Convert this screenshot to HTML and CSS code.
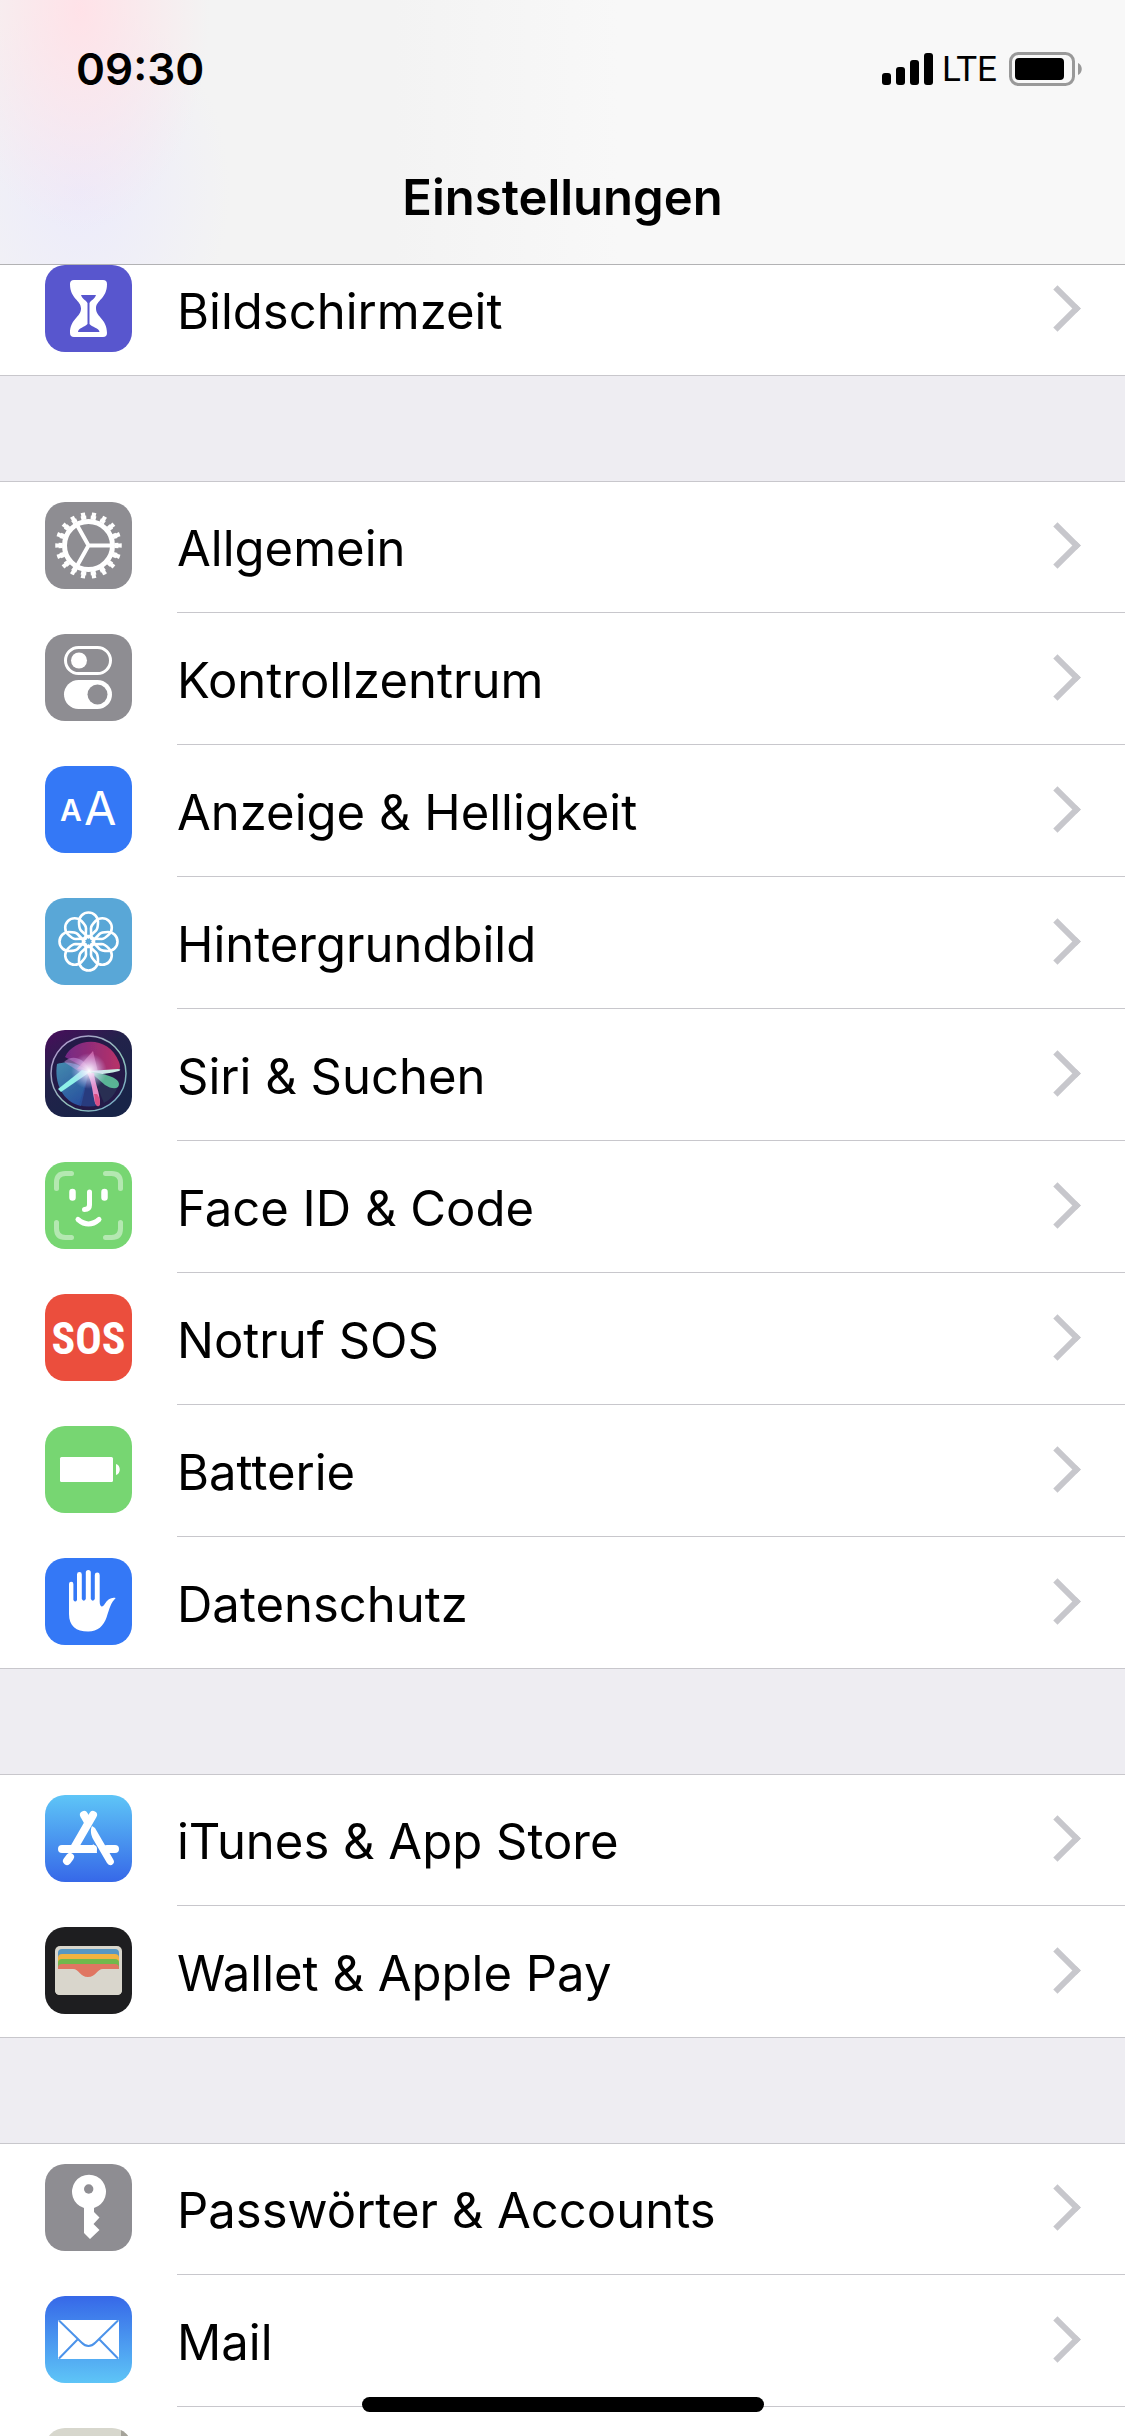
FILE: index.html
```
<!DOCTYPE html>
<html lang="de">
<head>
    <meta charset="UTF-8">
    <meta name="viewport" content="width=device-width, initial-scale=1.0">
    <title>Einstellungen</title>
    <link rel="stylesheet" href="styles.css">
</head>
<body>

<header class="header">
    <div class="status">
        <span class="time">09:30</span>
        <div class="statusRight">
            <svg class="signal" viewBox="0 0 52 33" aria-hidden="true">
                <rect x="0" y="20" width="9" height="12" rx="3"/>
                <rect x="14" y="14" width="9" height="18" rx="3"/>
                <rect x="28" y="7" width="9" height="25" rx="3"/>
                <rect x="42" y="0" width="9" height="32" rx="3"/>
            </svg>
            <span class="network">LTE</span>
            <svg class="batteryStatus" viewBox="0 0 74 34" aria-hidden="true">
                <rect x="1.5" y="1.5" width="63" height="31" rx="8" fill="none" stroke="#999" stroke-width="3"/>
                <rect x="6" y="6" width="49" height="22" rx="4"/>
                <path d="M69 11c5 2 5 10 0 12z" fill="#999"/>
            </svg>
        </div>
    </div>
    <h1>Einstellungen</h1>
</header>

<main class="list">
    <ul class="group">
        <li><a class="row" href="#">
            <svg class="icon purple" viewBox="0 0 87 87" aria-hidden="true">
                <path d="M29 15h29q4 0 4 4C62 34 51 35 51 43.500S62 54 62 68q0 4-4 4H29q-4 0-4-4C25 54 36 52 36 43.500S25 34 25 19q0-4 4-4z" fill="#fff"/>
                <path d="M36 30h15c-1 4-5 5-6.500 8v21c2 3 10 4 10 8H33c0-4 7-5 9.500-8V38c-1.500-3-5.500-4-6.500-8z" fill="#5856ce"/>
            </svg>
            <span class="label">Bildschirmzeit</span>
        </a></li>
    </ul>

    <ul class="group">
        <li><a class="row" href="#">
            <svg class="icon gray" viewBox="0 0 87 87" aria-hidden="true">
                <g fill="none" stroke="#fff">
                    <circle cx="43.5" cy="43.5" r="24" stroke-width="5"/>
                    <circle cx="43.5" cy="43.5" r="28" stroke-width="4" pathLength="180" stroke-dasharray="5.4 4.600" stroke-dashoffset="2.7"/>
                    <circle cx="43.5" cy="43.5" r="31" stroke-width="4.500" pathLength="180" stroke-dasharray="3.8 6.2" stroke-dashoffset="1.9"/>
                    <path d="M43.500 43.500H66M43.500 43.500L32 23M43.500 43.500L32 64" stroke-width="4"/>
                </g>
            </svg>
            <span class="label">Allgemein</span>
        </a></li>
        <li><a class="row" href="#">
            <svg class="icon gray" viewBox="0 0 87 87" aria-hidden="true">
                <rect x="20.5" y="13.5" width="45" height="26" rx="13" fill="none" stroke="#fff" stroke-width="3"/>
                <circle cx="34" cy="26.5" r="8" fill="#fff"/>
                <rect x="19" y="46" width="48" height="29" rx="14.5" fill="#fff"/>
                <circle cx="52.5" cy="60.5" r="10" fill="#8e8d92"/>
            </svg>
            <span class="label">Kontrollzentrum</span>
        </a></li>
        <li><a class="row" href="#">
            <svg class="icon blue" viewBox="0 0 87 87" aria-hidden="true">
                <text class="smallA" x="15" y="55">A</text>
                <text class="bigA" x="39" y="59">A</text>
            </svg>
            <span class="label">Anzeige &amp; Helligkeit</span>
        </a></li>
        <li><a class="row" href="#">
            <svg class="icon lightBlue" viewBox="0 0 87 87" aria-hidden="true">
                <g fill="none" stroke="#fff" stroke-width="2.6" stroke-linejoin="round">
                    <circle cx="43.5" cy="43.5" r="5.500"/>
                    <g id="flower">
                        <path id="petal" d="M43.500 39.500L36 32.500Q34 30.500 34 24a9.500 9.500 0 0 1 19 0Q53 30.500 51 32.500z"/>
                        <use href="#petal" transform="rotate(45 43.5 43.5)"/>
                        <use href="#petal" transform="rotate(90 43.5 43.5)"/>
                        <use href="#petal" transform="rotate(135 43.5 43.5)"/>
                    </g>
                    <use href="#flower" transform="rotate(180 43.5 43.5)"/>
                </g>
            </svg>
            <span class="label">Hintergrundbild</span>
        </a></li>
        <li><a class="row" href="#">
            <svg class="icon" viewBox="0 0 87 87" aria-hidden="true">
                <defs>
                    <linearGradient id="siriBg" x1="0" y1="0" x2="0.6" y2="1">
                        <stop offset="0" stop-color="#4a0d5c"/>
                        <stop offset="0.45" stop-color="#22224a"/>
                        <stop offset="1" stop-color="#182448"/>
                    </linearGradient>
                    <linearGradient id="siriRing" x1="0" y1="0" x2="1" y2="1">
                        <stop offset="0" stop-color="#b48fd0"/>
                        <stop offset="0.6" stop-color="#8fc4b8"/>
                        <stop offset="1" stop-color="#6f9fc8"/>
                    </linearGradient>
                    <linearGradient id="siriPink" x1="0" y1="0" x2="1" y2="0">
                        <stop offset="0" stop-color="#7c2a8c"/>
                        <stop offset="1" stop-color="#c8346c"/>
                    </linearGradient>
                    <linearGradient id="siriBlue" x1="0" y1="0" x2="0.5" y2="1">
                        <stop offset="0" stop-color="#4a9fc0"/>
                        <stop offset="1" stop-color="#2a5fae"/>
                    </linearGradient>
                    <radialGradient id="siriGlow">
                        <stop offset="0" stop-color="#fff"/>
                        <stop offset="0.35" stop-color="#f0e8ff" stop-opacity="0.7"/>
                        <stop offset="1" stop-color="#d0c0ff" stop-opacity="0"/>
                    </radialGradient>
                    <filter id="soft"><feGaussianBlur stdDeviation="0.7"/></filter>
                </defs>
                <rect width="87" height="87" fill="url(#siriBg)"/>
                <circle cx="43.5" cy="43.5" r="37.5" fill="#241a48" stroke="url(#siriRing)" stroke-width="1.5"/>
                <g filter="url(#soft)">
                    <path d="M20 27C29 8 63 4 74 32q2 5 0 8L46 41z" fill="url(#siriPink)" opacity="0.9"/>
                    <path d="M12 34C24 30 34 34 44 42L36 76C17 72 9 52 12 34z" fill="url(#siriBlue)" opacity="0.85"/>
                    <path d="M44 42L34 75q10 3 19 0z" fill="#2b4a96" opacity="0.7"/>
                    <path d="M46 42l27 14q-4 12-14 17z" fill="#2c3c5c" opacity="0.6"/>
                    <path d="M19 32c8-8 20-5 27 10l-8 2z" fill="#c79ae0" opacity="0.5"/>
                    <path d="M32 39L48 21l5 21z" fill="#e889c8" opacity="0.6"/>
                    <path d="M44 41l29-2q4 0 1 2-12 3-28 4z" fill="#c8ece4"/>
                    <path d="M44 41c14 3 30 6 30 13 0 6-8 5-14 1z" fill="#5fc49c" opacity="0.9"/>
                    <path d="M45 42L16 62l-3-3 24-19z" fill="#8ef0e8"/>
                    <path d="M42 43c5 8 5 18 8 30q3 6 5 1c0-12-5-20-6-31z" fill="#e58cc6"/>
                    <path d="M49 64c1 3 0 7 2 11q3 3 4-1c0-5-1-7-3-10z" fill="#d84f86"/>
                </g>
                <circle cx="44" cy="41" r="18" fill="url(#siriGlow)"/>
            </svg>
            <span class="label">Siri &amp; Suchen</span>
        </a></li>
        <li><a class="row" href="#">
            <svg class="icon green" viewBox="0 0 87 87" aria-hidden="true">
                <g fill="none" stroke="#fff" stroke-width="5" stroke-linecap="round">
                    <path d="M11.500 26.500v-6q0-9 9-9h6M60.500 11.500h6q9 0 9 9v6M75.500 60.500v6q0 9-9 9h-6M26.500 75.500h-6q-9 0-9-9v-6" opacity="0.45"/>
                    <path d="M27.500 30v5.500M59.500 30v5.500" stroke-width="6.5"/>
                    <path d="M44.500 30v13q0 4.500-5 4.500"/>
                    <path d="M33 57.500q10.500 9 21 0"/>
                </g>
            </svg>
            <span class="label">Face ID &amp; Code</span>
        </a></li>
        <li><a class="row" href="#">
            <svg class="icon red" viewBox="0 0 87 87" aria-hidden="true">
                <text class="sos" x="43.5" y="60">SOS</text>
            </svg>
            <span class="label">Notruf SOS</span>
        </a></li>
        <li><a class="row" href="#">
            <svg class="icon green" viewBox="0 0 87 87" aria-hidden="true">
                <rect x="15" y="31" width="53" height="25" rx="1.5" fill="#fff"/>
                <path d="M71 38c5 1 5 10 0 11z" fill="#fff"/>
            </svg>
            <span class="label">Batterie</span>
        </a></li>
        <li><a class="row" href="#">
            <svg class="icon blue" viewBox="0 0 87 87" aria-hidden="true">
                <path d="M24 26a2.200 2.200 0 0 1 4.400 0V42q2 3 3.600 0V16.500a2.400 2.400 0 0 1 4.800 0V41q2 3.500 4 0V14.500a2.500 2.500 0 0 1 5 0V41q2 3.500 4 0V17a2.400 2.400 0 0 1 4.900 0V44c0 5 3 6 5 2 3-5 7-7 11-6-5 5-6 10-9 19-3 9-9 14.500-18.500 14.500C31 73.500 24 68 24 56z" fill="#fff"/>
            </svg>
            <span class="label">Datenschutz</span>
        </a></li>
    </ul>

    <ul class="group">
        <li><a class="row" href="#">
            <svg class="icon appStore" viewBox="0 0 87 87" aria-hidden="true">
                <g fill="none" stroke="#fff" stroke-width="8" stroke-linecap="round">
                    <path d="M48 20L29 53"/>
                    <path d="M39 20l4 7"/>
                    <path d="M17 54h31"/>
                    <path d="M62 54h8"/>
                    <path d="M25 62l-3 4"/>
                </g>
                <path d="M47 31c-2 4-1 9 1 13l14 24q3 4 6 1 2-2 0-5L50 33z" fill="#fff"/>
                <path d="M48 49q4 3 4 9h-6z" fill="#fff"/>
            </svg>
            <span class="label">iTunes &amp; App Store</span>
        </a></li>
        <li><a class="row" href="#">
            <svg class="icon dark" viewBox="0 0 87 87" aria-hidden="true">
                <rect x="10" y="19" width="67" height="49" rx="5" fill="#d9d6cc"/>
                <path d="M13 42V26q0-4 4-4h53q4 0 4 4v16z" fill="#5797c2"/>
                <path d="M13 42V31q0-4 4-4h53q4 0 4 4v11z" fill="#f1b340"/>
                <path d="M13 42V36q0-4 4-4h53q4 0 4 4v6z" fill="#71b84c"/>
                <path d="M13 42V41q0-4 4-4h53q4 0 4 4v1L60 52H28z" fill="#e07662"/>
                <path d="M10 42h18c6 0 7 8 15 8s9-8 15-8h19v21q0 5-5 5H15q-5 0-5-5z" fill="#d9d6cc"/>
            </svg>
            <span class="label">Wallet &amp; Apple Pay</span>
        </a></li>
    </ul>

    <ul class="group">
        <li><a class="row" href="#">
            <svg class="icon gray" viewBox="0 0 87 87" aria-hidden="true">
                <path d="M39 44a17 17 0 1 1 10 0v4l5.500 5.500L48.500 60l6 6L45 75l-6-6z" fill="#fff"/>
                <circle cx="43.7" cy="25" r="4.7" fill="#8e8d92"/>
            </svg>
            <span class="label">Passwörter &amp; Accounts</span>
        </a></li>
        <li><a class="row" href="#">
            <svg class="icon mail" viewBox="0 0 87 87" aria-hidden="true">
                <rect x="13" y="24" width="61" height="39" rx="1.5" fill="#fff"/>
                <path d="M14 24.500L36.500 46.500q7 7 14 0L73 24.500M14 62.500L32.500 43.500M73 62.500L54.500 43.500" fill="none" stroke="#4c93ea" stroke-width="2"/>
            </svg>
            <span class="label">Mail</span>
        </a></li>
        <li><a class="row" href="#" aria-label="Kontakte">
            <svg class="icon contacts" viewBox="0 0 87 87" aria-hidden="true">
                <path d="M76 0h11v87H76z" fill="#a5a39a"/>
            </svg>
            <span class="label"></span>
        </a></li>
    </ul>
</main>

<div class="homeBar"></div>

</body>
</html>
```
FILE: styles.css
```
* {
    box-sizing: border-box;
}
body {
    margin: 0;
    height: 100vh;
    display: flex;
    flex-direction: column;
    overflow: hidden;
    background-color: #eeedf2;
    color: #000;
    font-family: Inter, "Liberation Sans", sans-serif;
}
.header {
    position: relative; /* keeps the bar above the scrolled list */
    z-index: 1;
    flex: none;
    border-bottom: 1px solid #b2b2b4;
    background:
        radial-gradient(130px 220px at 80px 10px, #ffe2e8, transparent),
        radial-gradient(150px 190px at 80px 190px, #ecebfb, transparent),
        linear-gradient(90deg, #f3f3f3 0%, #f3f3f3 35%, #f8f8f8 55%, #f8f8f8 100%);
}
.status {
    display: flex;
    justify-content: space-between;
    align-items: center;
    height: 138px;
    padding: 0 42px 0 76px;
}
.time {
    font-size: 44px;
    font-weight: 600;
}
.statusRight {
    display: flex;
    align-items: center;
}
.signal {
    width: 52px;
    height: 33px;
}
.network {
    margin: 0 12px 0 8px;
    font-family: Roboto, "Liberation Sans", sans-serif;
    font-size: 35px;
}
.batteryStatus {
    width: 74px;
    height: 34px;
}
h1 {
    margin: 0;
    height: 126px;
    font-size: 49px;
    font-weight: 600;
    line-height: 120px;
    text-align: center;
}
.list {
    flex: 1;
    margin-top: -21px; /* list is scrolled a bit under the header */
    overflow: hidden;
}
.group {
    margin: 0 0 105px;
    padding: 0;
    list-style: none;
    background-color: #fff;
    border-bottom: 1px solid #c8c7cc;
    box-shadow: inset 0 1px #c8c7cc;
}
.row {
    display: flex;
    align-items: center;
    height: 132px;
    padding-left: 45px;
    color: inherit;
    text-decoration: none;
}
.group li:last-child .row {
    height: 131px;
}
.icon {
    flex: none;
    width: 87px;
    height: 87px;
    margin-bottom: 3px;
    border-radius: 20px;
}
.label {
    flex: 1;
    display: flex;
    align-items: center;
    justify-content: space-between;
    height: 100%;
    margin-left: 45px;
    padding: 3px 51px 0 0;
    border-bottom: 1px solid #c8c7cc;
    font-size: 49px;
}
.group li:last-child .label {
    border-bottom: 0;
}
.label::after {
    content: "";
    width: 27px;
    height: 27px;
    margin-bottom: 5px;
    border: solid #c7c7cc;
    border-width: 6px 6px 0 0;
    transform: rotate(45deg);
}
.purple {
    background-color: #5856ce;
}
.gray {
    background-color: #8e8d92;
}
.blue {
    background-color: #3478f6;
}
.lightBlue {
    background-color: #59a7d7;
}
.green {
    background-color: #77d672;
}
.red {
    background-color: #eb4e3d;
}
.dark {
    background-color: #1e1e20;
}
.appStore {
    background-image: linear-gradient(#5ec5f7, #3668e8);
}
.mail {
    background-image: linear-gradient(#3668e8, #5ec5f7);
}
.contacts {
    background-color: #d7d7cd;
}
.smallA, .bigA, .sos {
    fill: #fff;
}
.smallA {
    font-size: 30px;
    font-weight: 600;
}
.bigA {
    font-size: 47px;
}
.sos {
    font-family: "Liberation Sans Narrow", "Roboto Condensed", "Liberation Sans", sans-serif;
    font-size: 44px;
    font-weight: 700;
    text-anchor: middle;
}
.homeBar {
    position: fixed;
    bottom: 24px;
    left: 50%;
    width: 402px;
    height: 15px;
    margin-left: -201px;
    border-radius: 8px;
    background-color: #000;
}
```
